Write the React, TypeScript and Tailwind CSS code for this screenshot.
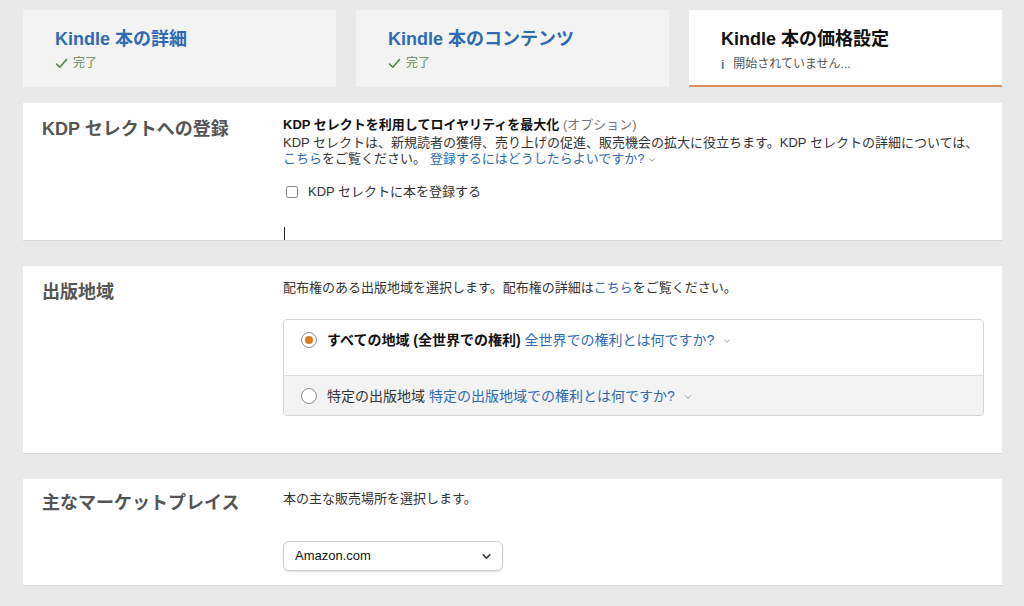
import { ChevronDown } from "lucide-react";

const font = { fontFamily: '"Liberation Sans", "Noto Sans CJK JP", sans-serif' };

function Check() {
  return (
    <svg width="13" height="11" viewBox="0 0 13 11" className="shrink-0">
      <path d="M1.5 6 L4.8 9.2 L11.5 1.5" fill="none" stroke="#4c8a3c" strokeWidth="1.6" strokeLinecap="round" strokeLinejoin="round" />
    </svg>
  );
}

function Tab({ title, done, active }: { title: string; done?: boolean; active?: boolean }) {
  return (
    <div
      className={`h-[77px] pl-8 pt-[17px] ${active ? "bg-white border-b-2 border-[#d99363]" : "bg-[#f3f3f3]"}`}
    >
      <div className={`text-[18px] font-bold leading-[24px] ${active ? "text-[#111]" : "text-[#2e6bb3]"}`}>{title}</div>
      {done ? (
        <div className="flex items-center gap-[5px] mt-[4px] text-[12px] leading-[16px] text-[#5f8a50]">
          <Check />
          <span>完了</span>
        </div>
      ) : (
        <div className="flex items-center gap-[9px] mt-[3px] text-[12px] leading-[16px] text-[#555]">
          <span className="text-[#3b7d8c] font-bold text-[12px] pt-[3px]">i</span>
          <span>開始されていません...</span>
        </div>
      )}
    </div>
  );
}

function Card({ label, children, className }: { label: string; children: React.ReactNode; className?: string }) {
  return (
    <div className={`bg-white flex border-b border-[#d6d6d6] ${className ?? ""}`}>
      <div className="w-[260px] shrink-0 pl-[19px] text-[18px] font-bold leading-[26px] text-[#555]">{label}</div>
      <div className="flex-1 pr-[18px]">{children}</div>
    </div>
  );
}

function Radio({ checked }: { checked?: boolean }) {
  return (
    <span className="w-[16px] h-[16px] rounded-full border border-[#8a8a8a] bg-white flex items-center justify-center shrink-0">
      {checked && <span className="w-[8px] h-[8px] rounded-full bg-[#e07b1f]" />}
    </span>
  );
}

export default function App() {
  return (
    <div className="w-[1024px] h-[606px] overflow-hidden bg-[#e9e9e9] pl-[23px] pr-[22px] pt-[10px] text-[#333]" style={font}>
      <div className="grid grid-cols-3 gap-5">
        <Tab title="Kindle 本の詳細" done />
        <Tab title="Kindle 本のコンテンツ" done />
        <Tab title="Kindle 本の価格設定" active />
      </div>

      <Card label="KDP セレクトへの登録" className="mt-4 h-[138px] pt-[13px]">
        <div className="text-[13px] leading-[18px]">
          <span className="font-bold text-[#111]">KDP セレクトを利用してロイヤリティを最大化</span>{" "}
          <span className="text-[#777]">(オプション)</span>
        </div>
        <div className="text-[13px] leading-[16px] mt-[1px]">
          KDP セレクトは、新規読者の獲得、売り上げの促進、販売機会の拡大に役立ちます。KDP セレクトの詳細については、
          <br />
          <span className="text-[#2e6bb3]">こちら</span>をご覧ください。{" "}
          <span className="text-[#2e6bb3]">
            登録するにはどうしたらよいですか?
            <ChevronDown className="inline w-[10px] h-[10px] ml-[2px] text-[#888]" />
          </span>
        </div>
        <label className="flex items-center gap-[10px] mt-[16px] ml-[3px] text-[13px] leading-[18px]">
          <span className="w-[12px] h-[12px] border border-[#888] rounded-[2px] bg-white" />
          <span>KDP セレクトに本を登録する</span>
        </label>
        <div className="w-px h-[13px] bg-[#222] mt-[26px] ml-[1px]" />
      </Card>

      <Card label="出版地域" className="mt-[25px] h-[188px] pt-[13px]">
        <div className="text-[13px] leading-[18px]">
          配布権のある出版地域を選択します。配布権の詳細は<span className="text-[#2e6bb3]">こちら</span>をご覧ください。
        </div>
        <div className="mt-[22px] border border-[#d5d5d5] rounded-[4px] overflow-hidden">
          <div className="h-[55px] pl-[17px] pt-[10px] flex items-start gap-[10px] text-[14px] leading-[20px] bg-white">
            <span className="pt-[2px]"><Radio checked /></span>
            <span>
              <span className="font-bold text-[#111]">すべての地域 (全世界での権利)</span>{" "}
              <span className="text-[#2e6bb3]">全世界での権利とは何ですか?</span>
              <ChevronDown className="inline w-[10px] h-[10px] ml-[8px] text-[#888]" />
            </span>
          </div>
          <div className="h-[40px] pl-[17px] flex items-center gap-[10px] text-[14px] leading-[20px] bg-[#f3f3f3] border-t border-[#dcdcdc]">
            <Radio />
            <span>
              特定の出版地域{" "}
              <span className="text-[#2e6bb3]">特定の出版地域での権利とは何ですか?</span>
              <ChevronDown className="inline w-[10px] h-[10px] ml-[8px] text-[#888]" />
            </span>
          </div>
        </div>
      </Card>

      <Card label="主なマーケットプレイス" className="mt-[25px] h-[107px] pt-[11px]">
        <div className="text-[13px] leading-[18px]">本の主な販売場所を選択します。</div>
        <div className="mt-[33px] w-[220px] h-[30px] border border-[#cfcfcf] rounded-[6px] shadow-[0_1px_2px_rgba(0,0,0,0.12)] bg-white flex items-center justify-between pl-[11px] pr-[9px] text-[13px] text-[#111]">
          <span>Amazon.com</span>
          <ChevronDown className="w-[13px] h-[13px] text-[#444]" strokeWidth={3} />
        </div>
      </Card>
    </div>
  );
}
